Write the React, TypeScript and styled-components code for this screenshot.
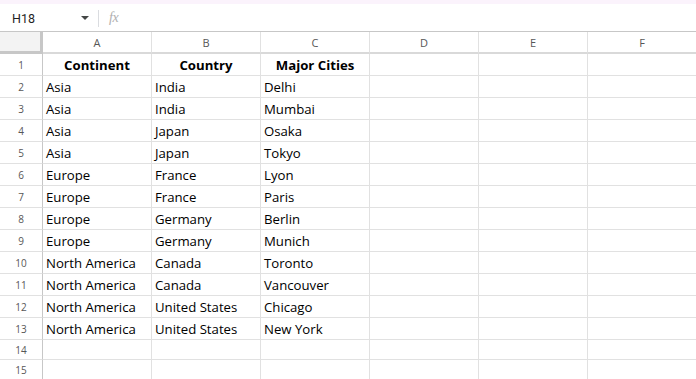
import { FC, Fragment } from "react";
import styled, { createGlobalStyle } from "styled-components";

const GlobalStyle = createGlobalStyle`
  body {
    margin: 0;
    background: #ffffff;
    font-family: "Open Sans", "Noto Sans", Arial, sans-serif;
    overflow: hidden;
  }
`;

const Page = styled.div`
  width: 696px;
  height: 379px;
  overflow: hidden;
  display: flex;
  flex-direction: column;

  & > * {
    flex-shrink: 0;
  }
`;

const TopStrip = styled.div`
  height: 4px;
  background: #fbf3fc;
`;

const FormulaBar = styled.div`
  display: flex;
  align-items: center;
  height: 26px;
  padding-top: 1px;
  border-bottom: 1px solid #c7c7c7;
`;

const NameBox = styled.div`
  display: flex;
  align-items: center;
  justify-content: space-between;
  width: 77px;
  padding-left: 12px;
  font-size: 12.5px;
  color: #1f1f1f;
  font-family: "Roboto", Arial, sans-serif;
`;

const Caret = styled.span`
  width: 0;
  height: 0;
  border-left: 4px solid transparent;
  border-right: 4px solid transparent;
  border-top: 4px solid #444746;
`;

const Divider = styled.div`
  width: 1px;
  height: 17px;
  background: #dadce0;
  margin-left: 9px;
  margin-right: 10px;
`;

const Fx = styled.span`
  font-family: "Liberation Serif", serif;
  font-style: italic;
  font-size: 14px;
  color: #b0b0b0;
  letter-spacing: -0.5px;
`;

const Grid = styled.div`
  display: grid;
  grid-template-columns: 43px repeat(6, 109px);
  grid-template-rows: 22px repeat(13, 22px) 20px 20px;
`;

const Corner = styled.div`
  background: #f3f3f3;
  border-right: 3px solid #c7c7c7;
  border-bottom: 3px solid #c7c7c7;
  box-sizing: border-box;
`;

const ColHead = styled.div`
  display: flex;
  align-items: center;
  justify-content: center;
  font-size: 11px;
  color: #575757;
  border-right: 1px solid #e1e1e1;
  border-bottom: 2px solid #d9d9d9;
  box-sizing: border-box;
`;

const RowHead = styled.div`
  display: flex;
  align-items: center;
  justify-content: center;
  font-size: 10px;
  color: #575757;
  border-right: 1px solid #c7c7c7;
  border-bottom: 1px solid #e1e1e1;
  box-sizing: border-box;
`;

const Cell = styled.div<{ $bold?: boolean }>`
  display: flex;
  align-items: center;
  justify-content: ${(p) => (p.$bold ? "center" : "flex-start")};
  padding-left: ${(p) => (p.$bold ? "0" : "3px")};
  font-size: 13.2px;
  font-weight: ${(p) => (p.$bold ? 700 : 400)};
  color: #000000;
  border-right: 1px solid #e1e1e1;
  border-bottom: 1px solid #e1e1e1;
  box-sizing: border-box;
  white-space: nowrap;
  overflow: hidden;
`;

const columns = ["A", "B", "C", "D", "E", "F"];

const data: string[][] = [
  ["Continent", "Country", "Major Cities"],
  ["Asia", "India", "Delhi"],
  ["Asia", "India", "Mumbai"],
  ["Asia", "Japan", "Osaka"],
  ["Asia", "Japan", "Tokyo"],
  ["Europe", "France", "Lyon"],
  ["Europe", "France", "Paris"],
  ["Europe", "Germany", "Berlin"],
  ["Europe", "Germany", "Munich"],
  ["North America", "Canada", "Toronto"],
  ["North America", "Canada", "Vancouver"],
  ["North America", "United States", "Chicago"],
  ["North America", "United States", "New York"],
  [],
  [],
];

export const App: FC = () => {
  return (
    <Page>
      <GlobalStyle />
      <TopStrip />
      <FormulaBar>
        <NameBox>
          <span>H18</span>
          <Caret />
        </NameBox>
        <Divider />
        <Fx>fx</Fx>
      </FormulaBar>
      <Grid>
        <Corner />
        {columns.map((c) => (
          <ColHead key={c}>{c}</ColHead>
        ))}
        {data.map((row, r) => (
          <Fragment key={r}>
            <RowHead>{r + 1}</RowHead>
            {columns.map((c, i) => (
              <Cell key={c} $bold={r === 0}>
                {row[i] ?? ""}
              </Cell>
            ))}
          </Fragment>
        ))}
      </Grid>
    </Page>
  );
};

export default App;
